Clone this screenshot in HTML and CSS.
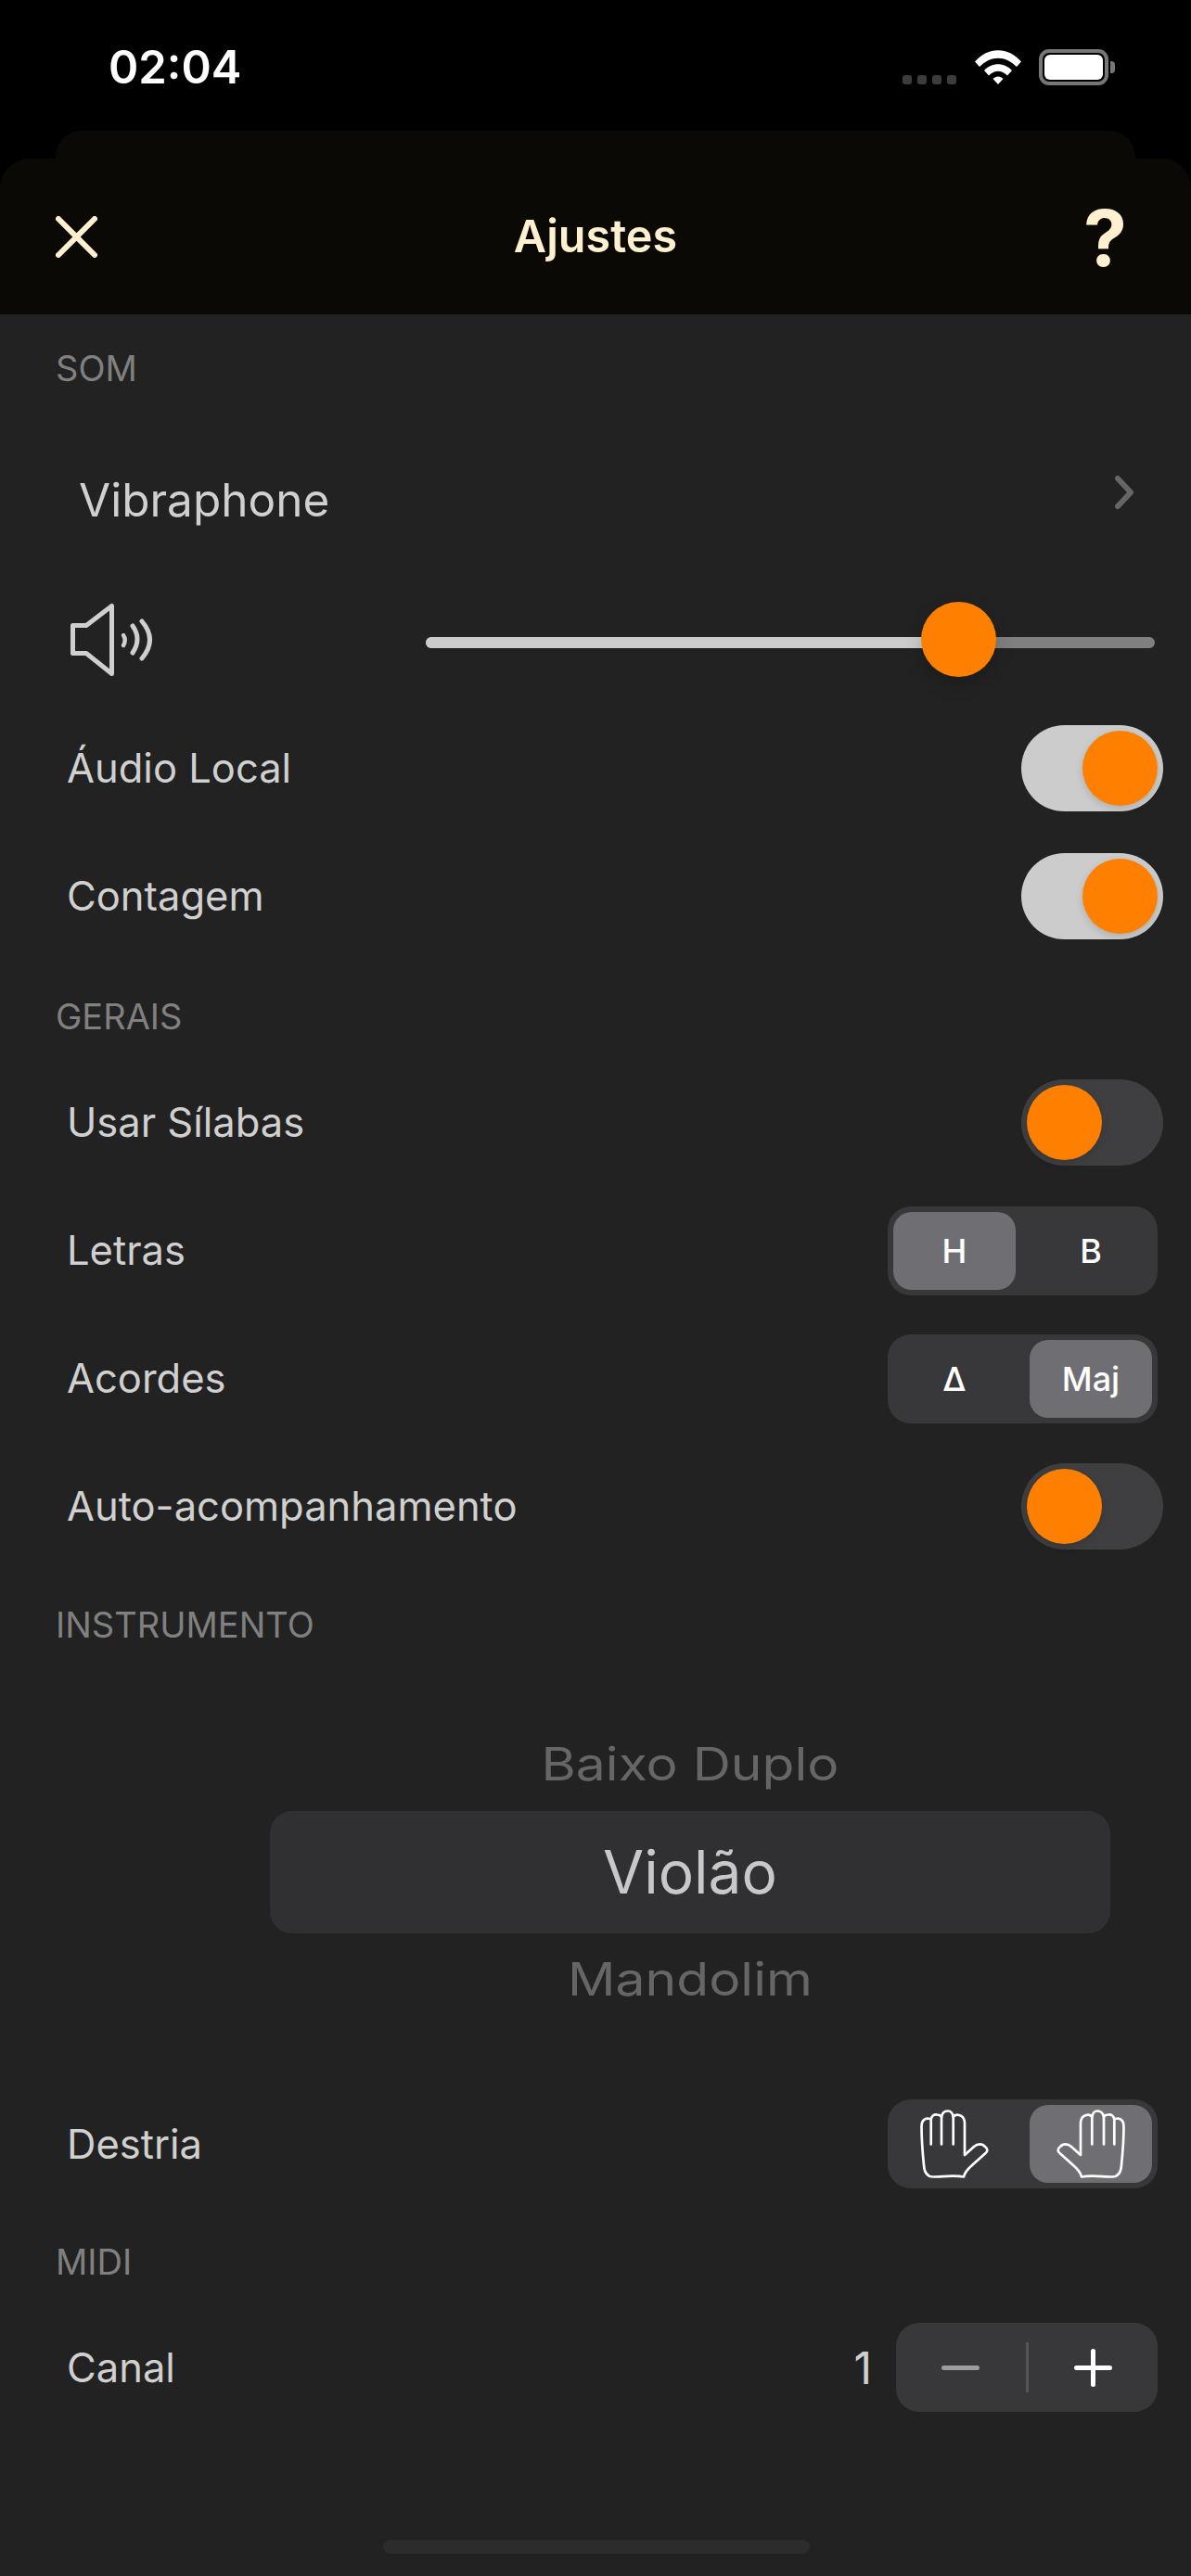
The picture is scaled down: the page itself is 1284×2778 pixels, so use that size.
FILE: index.html
```html
<!DOCTYPE html>
<html lang="en">
<head>
  <meta charset="UTF-8">
  <title>Ajustes</title>
  <link rel="stylesheet" href="styles.css">
</head>
<body>
  <div class="status-bar">
    <span class="time">02:04</span>
    <div class="status-icons">
      <div class="signal"><i></i><i></i><i></i><i></i></div>
      <svg class="wifi" width="50" height="37" viewBox="0 0 50 37">
        <path d="M0 12.500 C14 -4 36 -4 50 12.500 L45 18 C33 5.500 17 5.500 5 18 Z" fill="#fff"/>
        <path d="M10 22 C18 13 32 13 40 22 L35 27.500 C29 21 21 21 15 27.500 Z" fill="#fff"/>
        <path d="M19.500 31 C22.500 27.500 27.500 27.500 30.500 31 L25 37 Z" fill="#fff"/>
      </svg>
      <div class="battery"><div class="battery-level"></div></div>
    </div>
  </div>

  <div class="sheet-back"></div>
  <header class="nav">
    <svg class="close" width="45" height="45" viewBox="0 0 45 45">
      <path d="M3 3 L42 42 M42 3 L3 42" stroke="#fff0cf" stroke-width="6" stroke-linecap="round"/>
    </svg>
    <h1 class="nav-title">Ajustes</h1>
    <span class="help">?</span>
  </header>

  <main class="content">
    <h2 class="section-label">SOM</h2>
    <div class="sound-row">
      <span>Vibraphone</span>
      <svg class="chevron" width="24" height="38" viewBox="0 0 24 38">
        <path d="M5 4 L19 19 L5 34" fill="none" stroke="#666" stroke-width="6" stroke-linecap="round" stroke-linejoin="round"/>
      </svg>
    </div>
    <div class="volume-row">
      <svg class="speaker" width="90" height="80" viewBox="0 0 90 80">
        <path d="M3.500 24.500 H18 L45.500 3.500 V76.500 L18 54.500 H3.500 Z" fill="none" stroke="#cfcfcf" stroke-width="5" stroke-linejoin="round"/>
        <path d="M58 35 Q61.500 40 58 46" fill="none" stroke="#cfcfcf" stroke-width="4.500" stroke-linecap="round"/>
        <path d="M68 25 Q78 39 68 54" fill="none" stroke="#cfcfcf" stroke-width="5" stroke-linecap="round"/>
        <path d="M78 20 Q95 40 78 60" fill="none" stroke="#cfcfcf" stroke-width="5" stroke-linecap="round"/>
      </svg>
      <div class="slider">
        <div class="slider-fill"></div>
        <div class="slider-thumb"></div>
      </div>
    </div>
    <div class="row first-after-volume">
      <span>Áudio Local</span>
      <div class="toggle on"><div class="knob"></div></div>
    </div>
    <div class="row">
      <span>Contagem</span>
      <div class="toggle on"><div class="knob"></div></div>
    </div>

    <h2 class="section-label gerais-label">GERAIS</h2>
    <div class="row first-in-section">
      <span>Usar Sílabas</span>
      <div class="toggle"><div class="knob"></div></div>
    </div>
    <div class="row">
      <span>Letras</span>
      <div class="segment">
        <div class="segment-item selected">H</div>
        <div class="segment-item">B</div>
      </div>
    </div>
    <div class="row">
      <span>Acordes</span>
      <div class="segment">
        <div class="segment-item">Δ</div>
        <div class="segment-item selected">Maj</div>
      </div>
    </div>
    <div class="row">
      <span>Auto-acompanhamento</span>
      <div class="toggle"><div class="knob"></div></div>
    </div>

    <h2 class="section-label instrument-label">INSTRUMENTO</h2>
    <div class="picker">
      <div class="picker-item side">Baixo Duplo</div>
      <div class="picker-item current">Violão</div>
      <div class="picker-item side">Mandolim</div>
    </div>
    <div class="row">
      <span>Destria</span>
      <div class="segment flat">
        <div class="segment-item">
          <svg width="74" height="74" viewBox="0 0 74 74">
            <use href="#hand"/>
          </svg>
        </div>
        <div class="segment-item selected">
          <svg class="flip" width="74" height="74" viewBox="0 0 74 74">
            <use href="#hand"/>
          </svg>
        </div>
      </div>
    </div>

    <h2 class="section-label midi-label">MIDI</h2>
    <div class="row first-in-section">
      <span>Canal</span>
      <div class="stepper-wrap">
        <span class="channel">1</span>
        <div class="stepper">
          <div class="step">
            <svg width="41" height="41" viewBox="0 0 41 41"><path d="M2.500 20.500 H38.500" stroke="#9c9c9e" stroke-width="5" stroke-linecap="round"/></svg>
          </div>
          <div class="step-divider"></div>
          <div class="step">
            <svg width="41" height="41" viewBox="0 0 41 41"><path d="M2.500 20.500 H38.500 M20.500 2.500 V38.500" stroke="#fff" stroke-width="5" stroke-linecap="round"/></svg>
          </div>
        </div>
      </div>
    </div>
    <div class="home-indicator"></div>
  </main>

  <svg class="defs" width="0" height="0">
    <defs>
      <g id="hand" fill="none" stroke="#fff" stroke-width="2.700" stroke-linecap="round" stroke-linejoin="round">
        <path d="M47 72.500 C36 70.500 24 72.500 14 72.500 C7 72.500 4.500 68 4 60 C2.500 45 1.500 30 1.500 18 C1.500 12 4 10 8 9.500 C10 9.500 11 10 11.700 11 C12 7 15 5 18 5.500 C20 5.500 22 6 23 8 C24 3 27 1.500 30 1.500 C33 1.500 35 4 35.700 8 C37 6 40 5.500 42 6 C46 7 48 10 48 15 V49 L58 40 C62 36.500 67 36.500 70 40 C73 42 73 45 70.500 47 L56 60 C52 63.500 48 67 47 72.500 Z"/>
        <path d="M11.700 11 V37.500 M23 8 V37.500 M35.700 8 V37.500"/>
      </g>
    </defs>
  </svg>
</body>
</html>
```

FILE: styles.css
```css
* {
  box-sizing: border-box;
}

body {
  margin: 0;
  width: 1284px;
  height: 2778px;
  overflow: hidden;
  background: #000;
  color: #d0d0d0;
  font-family: Inter, "Noto Sans", sans-serif;
}

.status-bar {
  height: 141px;
  padding: 45px 89px 0 117px;
  display: flex;
  justify-content: space-between;
  align-items: flex-start;
}

.time {
  color: #fff;
  font-size: 49px;
  font-weight: 600;
  line-height: 56px;
}

.status-icons {
  display: flex;
  align-items: flex-start;
  padding-top: 9px;
}

.signal {
  display: flex;
  gap: 6px;
  margin-top: 27px;
  margin-right: 20px;
}

.signal i {
  width: 10px;
  height: 10px;
  border-radius: 3px;
  background: #3c3c3c;
}

.wifi {
  margin-right: 19px;
}

.battery {
  position: relative;
  width: 75px;
  height: 39px;
  margin-top: -1px;
  padding: 2px;
  border: 4px solid #777;
  border-radius: 11px;
}

.battery::after {
  content: "";
  position: absolute;
  top: 9px;
  right: -11px;
  width: 5px;
  height: 13px;
  background: #777;
  border-radius: 0 4px 4px 0;
}

.battery-level {
  height: 100%;
  background: #fff;
  border-radius: 6px;
}

.sheet-back {
  height: 30px;
  margin: 0 60px;
  background: #0b0906;
  border-radius: 28px 28px 0 0;
}

.nav {
  position: relative;
  height: 168px;
  padding: 0 60px;
  display: flex;
  justify-content: space-between;
  align-items: center;
  background: #0b0906;
  border-radius: 32px 32px 0 0;
  color: #fff0cf;
}

.nav-title {
  position: absolute;
  left: 0;
  right: 0;
  top: 54px;
  margin: 0;
  text-align: center;
  font-size: 48.5px;
  font-weight: 600;
  line-height: 60px;
}

.help {
  margin-top: 4px;
  margin-right: 9px;
  font-size: 84px;
  font-weight: 700;
  line-height: 90px;
}

.content {
  height: 2439px;
  padding: 29px 30px 0 60px;
  background: #222;
}

.section-label {
  margin: 0;
  height: 58px;
  font-size: 38px;
  font-weight: 400;
  line-height: 58px;
  color: #808080;
}

.gerais-label {
  margin-top: 32px;
}

.instrument-label {
  margin-top: 30px;
}

.midi-label {
  margin-top: 29px;
}

.sound-row {
  height: 142px;
  margin-top: 42px;
  display: flex;
  justify-content: space-between;
  align-items: center;
  padding: 0 30px 0 25px;
  font-size: 49.5px;
}

.chevron {
  margin-bottom: 16px;
}

.volume-row {
  height: 78px;
  margin-top: 41px;
  display: flex;
  align-items: center;
  justify-content: space-between;
  padding: 0 9px 0 15px;
}

.slider {
  position: relative;
  width: 786px;
  height: 12px;
  margin-top: 6px;
  background: #808080;
  border-radius: 6px;
}

.slider-fill {
  width: 575px;
  height: 100%;
  background: #ccc;
  border-radius: 6px 0 0 6px;
}

.slider-thumb {
  position: absolute;
  left: 534px;
  top: -38px;
  width: 81px;
  height: 81px;
  border-radius: 50%;
  background: #ff8000;
  box-shadow: 0 8px 20px rgba(0, 0, 0, 0.2);
}

.row {
  height: 138px;
  display: flex;
  justify-content: space-between;
  align-items: center;
  padding-left: 12px;
  font-size: 43.5px;
}

.first-after-volume {
  margin-top: 30px;
}

.first-in-section {
  margin-top: 16px;
}

.toggle {
  width: 153px;
  height: 93px;
  padding: 6px;
  border-radius: 47px;
  background: #3f3f41;
}

.toggle.on {
  background: #ccc;
  display: flex;
  justify-content: flex-end;
}

.knob {
  width: 81px;
  height: 81px;
  border-radius: 50%;
  background: #ff8000;
  box-shadow: 0 3px 8px rgba(0, 0, 0, 0.15);
}

.segment {
  width: 291px;
  height: 96px;
  margin-top: 2px;
  margin-right: 6px;
  padding: 6px;
  display: flex;
  justify-content: space-between;
  border-radius: 25px;
  background: #38383a;
}

.segment.flat {
  margin-top: 0;
}

.segment-item {
  width: 132px;
  height: 84px;
  display: flex;
  justify-content: center;
  align-items: center;
  border-radius: 20px;
  color: #fff;
  font-size: 36px;
  font-weight: 500;
}

.segment-item.selected {
  background: #6f6f73;
}

.flip {
  transform: scaleX(-1);
}

.picker {
  height: 462px;
  padding-top: 14px;
  margin-left: 231px;
  margin-right: 57px;
  display: flex;
  flex-direction: column;
  gap: 12px;
  align-items: center;
  justify-content: center;
  text-align: center;
}

.picker-item {
  width: 100%;
}

.picker-item.current {
  height: 132px;
  border-radius: 24px;
  background: #303032;
  color: #c8c8c8;
  font-size: 64px;
  line-height: 132px;
}

.picker-item.side {
  height: 76px;
  color: #666;
  font-size: 57px;
  line-height: 76px;
  transform: scaleY(0.87);
}

.stepper-wrap {
  display: flex;
  align-items: center;
  gap: 26px;
  margin-right: 6px;
}

.channel {
  font-size: 48px;
}

.stepper {
  width: 282px;
  height: 96px;
  display: flex;
  align-items: center;
  border-radius: 25px;
  background: #38383a;
}

.step {
  flex: 1;
  display: flex;
  justify-content: center;
  align-items: center;
}

.step-divider {
  width: 3px;
  height: 54px;
  background: #555557;
}

.step svg {
  display: block;
}

.home-indicator {
  position: absolute;
  left: 413px;
  top: 2739px;
  width: 460px;
  height: 15px;
  border-radius: 8px;
  background: #2c2c2c;
}

.defs {
  position: absolute;
}
```
